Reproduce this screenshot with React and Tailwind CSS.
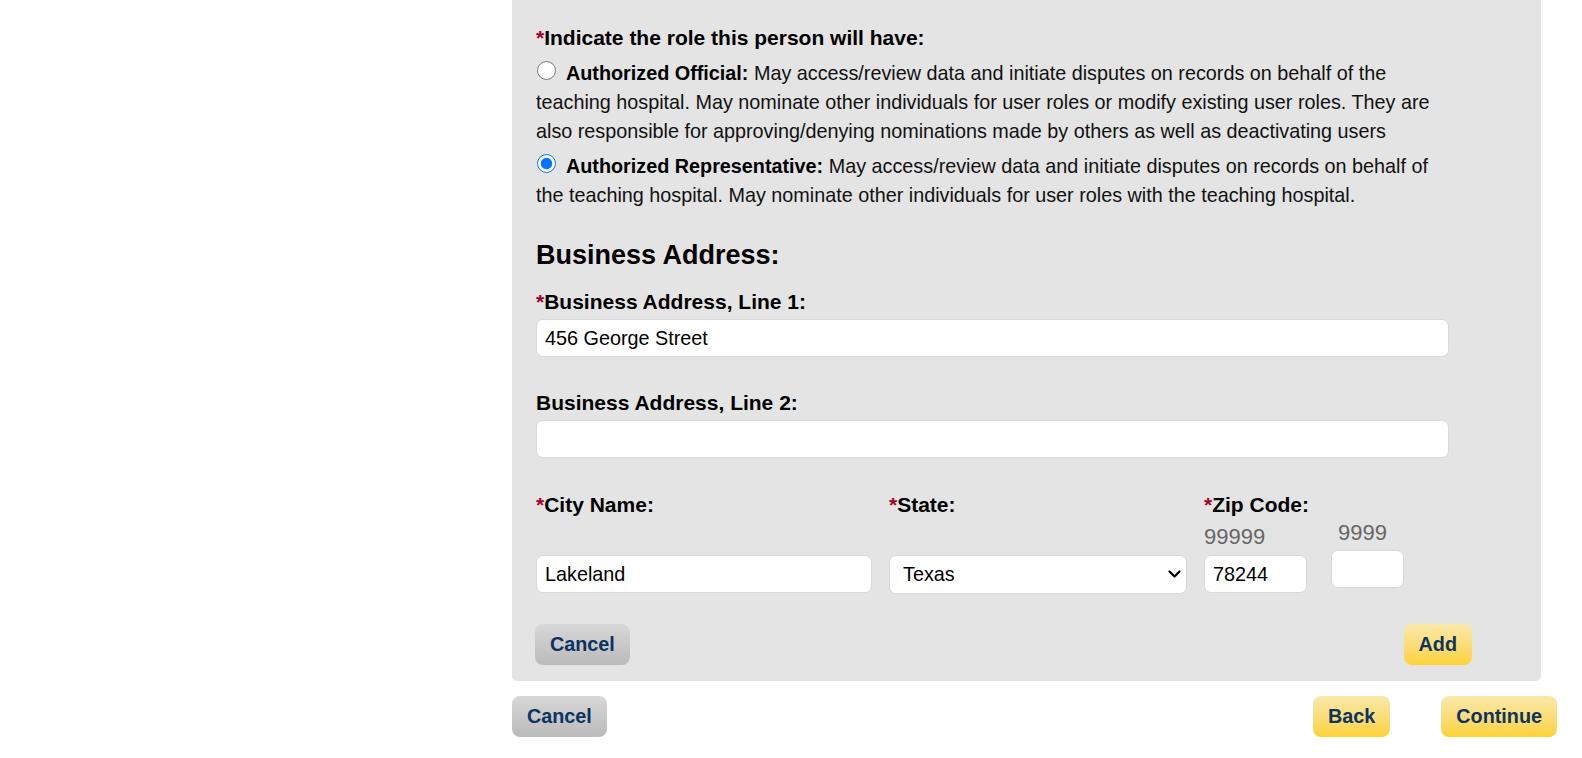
import React from "react";

function Req() {
  return <span className="text-[#a3002a]">*</span>;
}

function Label({ children, req = true }) {
  return (
    <div className="text-[21px] leading-[31px] font-bold text-black whitespace-nowrap">
      {req && <Req />}
      {children}
    </div>
  );
}

function TextInput({ value, className = "" }) {
  return (
    <input
      type="text"
      defaultValue={value}
      className={
        "block h-[38px] bg-white border border-[#d9d9d9] rounded-[7px] pl-[8px] pr-[8px] text-[19.8px] text-black outline-none " +
        className
      }
    />
  );
}

function YellowButton({ children, className = "" }) {
  return (
    <button
      className={
        "h-[41px] px-[15px] rounded-[8px] bg-gradient-to-b from-[#f9e8a8] to-[#fdd231] text-[#0b3463] font-bold text-[19.8px] leading-none " +
        className
      }
    >
      {children}
    </button>
  );
}

function GrayButton({ children, className = "" }) {
  return (
    <button
      className={
        "h-[41px] px-[15px] rounded-[8px] bg-gradient-to-b from-[#d9d8d8] to-[#bbbaba] text-[#0b3463] font-bold text-[19.8px] leading-none " +
        className
      }
    >
      {children}
    </button>
  );
}

export default function App() {
  return (
    <div className="min-h-[758px] bg-white flex font-['Liberation_Sans',Arial,sans-serif] text-black">
      <div className="w-[512px] shrink-0" />
      <div className="w-[1045px] shrink-0">
        <div className="w-[1029px] bg-[#e4e4e4] rounded-b-[5px] pl-[24px] pt-[22px] pb-[16px]">
          <div className="w-[913px]">
            <Label>Indicate the role this person will have:</Label>
            <p className="mt-[6px] text-[19.8px] leading-[29px] text-[#111]">
              <input
                type="radio"
                name="role"
                className="w-[19px] h-[19px] ml-[1px] mr-[10px] align-baseline"
              />
              <b className="text-black">Authorized Official:</b> May access/review data and initiate disputes on records on behalf of the teaching hospital. May nominate other individuals for user roles or modify existing user roles. They are also responsible for approving/denying nominations made by others as well as deactivating users
            </p>
            <p className="mt-[6px] text-[19.8px] leading-[29px] text-[#111]">
              <input
                type="radio"
                name="role"
                defaultChecked
                className="w-[19px] h-[19px] ml-[1px] mr-[10px] align-baseline accent-[#0075ff]"
              />
              <b className="text-black">Authorized Representative:</b> May access/review data and initiate disputes on records on behalf of the teaching hospital. May nominate other individuals for user roles with the teaching hospital.
            </p>

            <h2 className="mt-[29px] text-[27px] leading-[32px] font-bold text-black">
              Business Address:
            </h2>

            <div className="mt-[15px]">
              <Label>Business Address, Line 1:</Label>
              <TextInput value="456 George Street" className="mt-[2px] w-[913px]" />
            </div>

            <div className="mt-[30px]">
              <Label req={false}>Business Address, Line 2:</Label>
              <TextInput value="" className="mt-[2px] w-[913px]" />
            </div>

            <div className="mt-[31px] flex items-start">
              <div className="w-[336px] flex flex-col">
                <Label>City Name:</Label>
                <div className="h-[35px]" />
                <TextInput value="Lakeland" className="w-[336px]" />
              </div>
              <div className="ml-[17px] w-[298px] flex flex-col">
                <Label>State:</Label>
                <div className="h-[35px]" />
                <div className="relative w-[298px]">
                  <select
                    defaultValue="TX"
                    className="block appearance-none w-[298px] h-[39px] bg-white border border-[#d9d9d9] rounded-[7px] pl-[13px] text-[19.8px] text-black outline-none"
                  >
                    <option value="TX">Texas</option>
                  </select>
                  <svg
                    className="absolute right-[6px] top-[15px] pointer-events-none"
                    width="13"
                    height="9"
                    viewBox="0 0 13 9"
                  >
                    <polyline
                      points="1.5,1.5 6.5,6.5 11.5,1.5"
                      fill="none"
                      stroke="#000"
                      strokeWidth="2.2"
                      strokeLinecap="round"
                      strokeLinejoin="round"
                    />
                  </svg>
                </div>
              </div>
              <div className="ml-[17px] w-[103px] flex flex-col">
                <Label>Zip Code:</Label>
                <div className="h-[33px] text-[22px] leading-[33px] text-[#666]">99999</div>
                <TextInput value="78244" className="mt-[2px] w-[103px]" />
              </div>
              <div className="ml-[24px] w-[73px] flex flex-col pt-[27px]">
                <div className="h-[33px] text-[22px] leading-[33px] text-[#666] pl-[7px]">9999</div>
                <TextInput value="" className="mt-[1px] w-[73px]" />
              </div>
            </div>

            <div className="mt-[30px] -ml-[1px] w-[937px] flex justify-between">
              <GrayButton>Cancel</GrayButton>
              <YellowButton>Add</YellowButton>
            </div>
          </div>
        </div>

        <div className="mt-[15px] flex items-start">
          <GrayButton>Cancel</GrayButton>
          <YellowButton className="ml-auto">Back</YellowButton>
          <YellowButton className="ml-[51px]">Continue</YellowButton>
        </div>
      </div>
    </div>
  );
}
